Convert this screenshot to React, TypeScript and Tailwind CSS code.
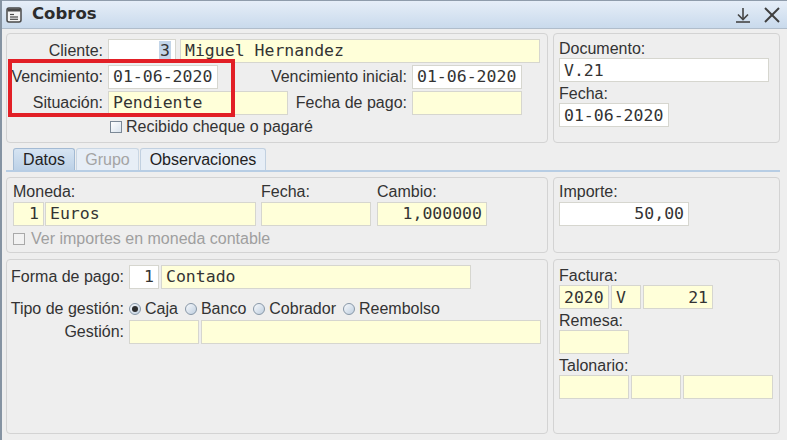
import React from "react";

function Box({ w, white, right, children }: any) {
  return (
    <div
      className={`${w} ${
        white ? "bg-white" : "bg-[#ffffd9]"
      } h-[24px] shrink-0 border border-[#d6d6cf] flex items-center px-[4px] font-['DejaVu_Sans_Mono',monospace] text-[16.5px] text-[#333] whitespace-pre ${
        right ? "justify-end" : ""
      }`}
    >
      {children}
    </div>
  );
}

function Check({ disabled }: any) {
  return (
    <div
      className={`w-[12px] h-[12px] shrink-0 border ${
        disabled
          ? "border-[#a9a9a9] bg-[#f2f2f2]"
          : "border-[#7b8896] bg-linear-to-br from-white to-[#d9e3ed]"
      }`}
    />
  );
}

function Radio({ on, label }: any) {
  return (
    <div className="flex items-center gap-[4px]">
      <div className="w-[12px] h-[12px] rounded-full border border-[#8797a7] bg-linear-to-br from-[#f7f9fc] to-[#bfcfdf] flex items-center justify-center">
        {on && <div className="w-[6px] h-[6px] rounded-full bg-[#2d2d2d]" />}
      </div>
      <span>{label}</span>
    </div>
  );
}

export default function App() {
  return (
    <div className="w-[787px] h-[440px] relative overflow-hidden bg-[#eeeeee] font-['Liberation_Sans',Arial,sans-serif] text-[16px] text-[#333] border-l-2 border-[#8593a2]">
      {/* title bar */}
      <div className="h-[29px] flex items-center bg-linear-to-b from-[#e6eef8] to-[#c9daec] border-t border-[#8f9cab] border-b border-b-[#b0bdcb] pl-[4px] pr-[5px]">
        <svg width="16" height="16" viewBox="0 0 16 16" className="shrink-0">
          <rect x="1" y="1" width="14" height="14" rx="2" fill="#f4f4f4" stroke="#4a4a4a" strokeWidth="1.5" />
          <rect x="1.5" y="1.5" width="13" height="3" fill="#4a4a4a" />
          <line x1="4" y1="7.5" x2="8" y2="7.5" stroke="#4a4a4a" strokeWidth="1.2" />
          <line x1="4" y1="10" x2="12" y2="10" stroke="#4a4a4a" strokeWidth="1.2" />
          <line x1="4" y1="12.3" x2="12" y2="12.3" stroke="#4a4a4a" strokeWidth="1.2" />
        </svg>
        <span className="ml-[10px] font-['DejaVu_Sans',sans-serif] font-bold text-[16.5px] text-[#2c2c2c]">
          Cobros
        </span>
        <div className="flex-1" />
        <svg width="18" height="18" viewBox="0 0 18 18" className="mr-[10px]">
          <line x1="9" y1="2" x2="9" y2="13" stroke="#444" strokeWidth="1.6" />
          <polyline points="4,8.5 9,13.5 14,8.5" fill="none" stroke="#444" strokeWidth="1.6" />
          <line x1="2" y1="16" x2="16" y2="16" stroke="#444" strokeWidth="1.6" />
        </svg>
        <svg width="20" height="20" viewBox="0 0 20 20">
          <line x1="3" y1="3" x2="17" y2="17" stroke="#3f3f3f" strokeWidth="2" />
          <line x1="17" y1="3" x2="3" y2="17" stroke="#3f3f3f" strokeWidth="2" />
        </svg>
      </div>

      <div className="pl-[4px] pr-[7px] pt-[4px]">
        {/* top section */}
        <div className="flex gap-[5px] h-[110px]">
          <div className="w-[542px] border border-[#d3d3d3] rounded-[4px] pt-[5px] leading-[24px]">
            <div className="flex items-center">
              <div className="w-[96px] text-right">Cliente:</div>
              <div className="ml-[5px] flex gap-[4px]">
                <Box w="w-[68px]" white right>
                  <span className="inline-block h-[20px] leading-[20px] bg-[#c3d5e8] px-[1px]">3</span>
                </Box>
                <Box w="w-[360px]">Miguel Hernandez</Box>
              </div>
            </div>
            <div className="flex items-center mt-[2px]">
              <div className="w-[96px] text-right">Vencimiento:</div>
              <div className="ml-[5px]">
                <Box w="w-[110px]" white>01-06-2020</Box>
              </div>
              <div className="w-[189px] text-right">Vencimiento inicial:</div>
              <div className="ml-[5px]">
                <Box w="w-[110px]" white>01-06-2020</Box>
              </div>
            </div>
            <div className="flex items-center mt-[2px]">
              <div className="w-[96px] text-right">Situación:</div>
              <div className="ml-[5px]">
                <Box w="w-[180px]">Pendiente</Box>
              </div>
              <div className="w-[119px] text-right">Fecha de pago:</div>
              <div className="ml-[5px]">
                <Box w="w-[110px]" />
              </div>
            </div>
            <div className="flex items-center ml-[103px] gap-[4px] leading-[20px] mt-[2px]">
              <Check />
              <span>Recibido cheque o pagaré</span>
            </div>
          </div>
          <div className="flex-1 border border-[#d3d3d3] rounded-[4px] px-[5px] pt-[5px] leading-[19px]">
            <div>Documento:</div>
            <Box w="w-[210px]" white>V.21</Box>
            <div className="mt-[2px]">Fecha:</div>
            <Box w="w-[110px]" white>01-06-2020</Box>
          </div>
        </div>

        {/* tabs */}
        <div className="mt-[5px] flex pl-[7px] h-[22px] items-end">
          <div className="w-[62px] h-[22px] rounded-t-[3px] border border-b-0 border-[#a3bad3] bg-linear-to-b from-[#d6e4f2] to-[#bcd1e7] flex items-center justify-center text-[#222]">
            Datos
          </div>
          <div className="ml-[1px] w-[63px] h-[22px] rounded-t-[3px] border border-b-0 border-[#c9d6e3] bg-[#e7eef6] flex items-center justify-center text-[#a4a4a4]">
            Grupo
          </div>
          <div className="ml-[1px] w-[126px] h-[22px] rounded-t-[3px] border border-b-0 border-[#c1d0e0] bg-[#e7eef6] flex items-center justify-center text-[#222]">
            Observaciones
          </div>
        </div>
        <div className="h-[2px] bg-[#b7cde4]" />

        {/* moneda */}
        <div className="mt-[5px] flex gap-[5px] h-[76px]">
          <div className="w-[542px] border border-[#d3d3d3] rounded-[4px] pl-[6px] pt-[4px]">
            <div className="flex leading-[20px]">
              <div className="w-[243px]">
                <div>Moneda:</div>
                <div className="flex gap-[1px]">
                  <Box w="w-[31px]" right>1</Box>
                  <Box w="w-[211px]">Euros</Box>
                </div>
              </div>
              <div className="ml-[5px] w-[110px]">
                <div>Fecha:</div>
                <Box w="w-[110px]" />
              </div>
              <div className="ml-[6px] w-[110px]">
                <div>Cambio:</div>
                <Box w="w-[110px]" right>1,000000</Box>
              </div>
            </div>
            <div className="flex items-center gap-[6px] mt-[3px] leading-[20px] text-[#9f9f9f]">
              <Check disabled />
              <span>Ver importes en moneda contable</span>
            </div>
          </div>
          <div className="flex-1 border border-[#d3d3d3] rounded-[4px] px-[5px] pt-[4px] leading-[20px]">
            <div>Importe:</div>
            <Box w="w-[130px]" white right>50,00</Box>
          </div>
        </div>

        {/* forma de pago */}
        <div className="mt-[6px] flex gap-[5px] h-[175px]">
          <div className="w-[542px] border border-[#d3d3d3] rounded-[4px] pt-[5px] leading-[24px]">
            <div className="flex items-center">
              <div className="w-[117px] text-right">Forma de pago:</div>
              <div className="ml-[5px] flex gap-[2px]">
                <Box w="w-[30px]" white right>1</Box>
                <Box w="w-[310px]">Contado</Box>
              </div>
            </div>
            <div className="flex items-center mt-[10px] leading-[20px]">
              <div className="w-[117px] text-right">Tipo de gestión:</div>
              <div className="ml-[5px] flex items-center gap-[7px]">
                <Radio on label="Caja" />
                <Radio label="Banco" />
                <Radio label="Cobrador" />
                <Radio label="Reembolso" />
              </div>
            </div>
            <div className="flex items-center mt-[1px]">
              <div className="w-[117px] text-right">Gestión:</div>
              <div className="ml-[5px] flex gap-[2px]">
                <Box w="w-[70px]" />
                <Box w="w-[340px]" />
              </div>
            </div>
          </div>
          <div className="flex-1 border border-[#d3d3d3] rounded-[4px] px-[5px] pt-[6px] leading-[19px]">
            <div>Factura:</div>
            <div className="flex gap-[2px]">
              <Box w="w-[50px]">2020</Box>
              <Box w="w-[30px]">V</Box>
              <Box w="w-[70px]" right>21</Box>
            </div>
            <div className="mt-[2px]">Remesa:</div>
            <Box w="w-[70px]" />
            <div className="mt-[2px]">Talonario:</div>
            <div className="flex gap-[2px]">
              <Box w="w-[70px]" />
              <Box w="w-[50px]" />
              <Box w="w-[90px]" />
            </div>
          </div>
        </div>
      </div>

      {/* red highlight annotation */}
      <div className="absolute left-[6px] top-[59px] w-[227px] h-[58px] border-4 border-[#e21f26] pointer-events-none" />
    </div>
  );
}
